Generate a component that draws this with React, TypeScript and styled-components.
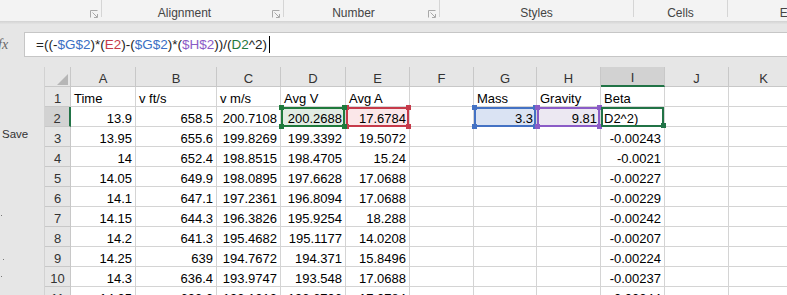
import React from "react";
import styled, { createGlobalStyle } from "styled-components";

const GlobalStyle = createGlobalStyle`
  html, body { margin: 0; padding: 0; background: #e6e6e6; overflow: hidden; }
  body { font-family: "Liberation Sans", Arial, sans-serif; }
`;

const Window = styled.div`
  width: 787px;
  height: 295px;
  overflow: hidden;
  background: #e6e6e6;
  display: flex;
  flex-direction: column;
`;

/* ---------- Ribbon ---------- */
const Ribbon = styled.div`
  height: 21px;
  flex-shrink: 0;
  background: #f3f3f3;
  display: flex;
  overflow: hidden;
`;

const Group = styled.div<{ $w: number }>`
  width: ${(p) => p.$w}px;
  flex-shrink: 0;
  display: flex;
  align-items: flex-start;
  white-space: nowrap;
`;

const GroupLabel = styled.div`
  flex: 1;
  text-align: center;
  padding-top: 6px;
  font-size: 12px;
  line-height: 14px;
  color: #444;
`;

const Launcher = styled.div`
  width: 16px;
  flex-shrink: 0;
  box-sizing: border-box;
  padding: 10px 0 0 5px;
  display: flex;
`;

const Sep = styled.div`
  width: 1px;
  height: 17px;
  flex-shrink: 0;
  background: #d5d5d5;
`;

const RibbonShadow = styled.div`
  height: 3px;
  flex-shrink: 0;
  background: linear-gradient(#d2d2d2, #e3e3e3);
`;

/* ---------- Formula bar ---------- */
const FormulaRow = styled.div`
  display: flex;
  height: 25px;
  margin: 8px 0 10px;
  flex-shrink: 0;
`;

const FxBox = styled.div`
  width: 24px;
  flex-shrink: 0;
  display: flex;
  align-items: center;
  overflow: hidden;
`;

const Fx = styled.span`
  font-family: "Liberation Serif", serif;
  font-style: italic;
  font-size: 14px;
  color: #666;
  margin-left: -2px;
`;

const FormulaInput = styled.div`
  flex: 1;
  box-sizing: border-box;
  background: #fff;
  border: 1px solid #c6c6c6;
  border-right: none;
  display: flex;
  align-items: center;
  padding-left: 11px;
  font-size: 13.5px;
  color: #222;
  white-space: nowrap;
`;

const Tok = styled.span<{ $c?: string }>`
  color: ${(p) => p.$c ?? "#222"};
`;

const Caret = styled.span`
  display: inline-block;
  width: 1px;
  height: 17px;
  margin-left: 2px;
  background: #000;
`;

/* ---------- Sheet ---------- */
const SheetArea = styled.div`
  flex: 1;
  display: flex;
  min-height: 0;
`;

const Sidebar = styled.div`
  width: 45px;
  flex-shrink: 0;
  box-sizing: border-box;
  border-right: 1px solid #d2d2d2;
  display: flex;
  flex-direction: column;
  align-items: flex-start;
`;

const SideText = styled.div`
  margin: 60px 0 0 2px;
  font-size: 11.5px;
  line-height: 14px;
  color: #333;
`;

const SideDot = styled.div<{ $mt: number; $ml: number }>`
  width: 1px;
  height: 1px;
  background: #777;
  margin-top: ${(p) => p.$mt}px;
  margin-left: ${(p) => p.$ml}px;
`;

const Grid = styled.div`
  display: flex;
  flex-direction: column;
`;

const Row = styled.div`
  display: flex;
`;

const Corner = styled.div`
  box-sizing: border-box;
  width: 26px;
  height: 20px;
  flex-shrink: 0;
  border-right: 1px solid #c8c8c8;
  border-bottom: 1px solid #c8c8c8;
  display: flex;
  align-items: flex-end;
  justify-content: flex-end;
  padding: 0 2px 1px 0;
`;

const CornerTri = styled.div`
  width: 0;
  height: 0;
  border-left: 11px solid transparent;
  border-bottom: 11px solid #b6b6b6;
`;

const ColHead = styled.div<{ $w: number; $sel?: boolean }>`
  box-sizing: border-box;
  width: ${(p) => p.$w}px;
  height: 20px;
  flex-shrink: 0;
  background: ${(p) => (p.$sel ? "#d2d2d2" : "#e6e6e6")};
  border-right: 1px solid #c8c8c8;
  border-bottom: ${(p) => (p.$sel ? "2px solid #217346" : "1px solid #c8c8c8")};
  display: flex;
  align-items: flex-end;
  justify-content: center;
  font-size: 13px;
  line-height: ${(p) => (p.$sel ? "14px" : "15px")};
  color: #333;
`;

const RowHead = styled.div<{ $sel?: boolean }>`
  box-sizing: border-box;
  width: 26px;
  height: 20px;
  flex-shrink: 0;
  background: ${(p) => (p.$sel ? "#d2d2d2" : "#e6e6e6")};
  border-bottom: 1px solid #c8c8c8;
  border-right: ${(p) => (p.$sel ? "2px solid #217346" : "1px solid #c8c8c8")};
  display: flex;
  align-items: flex-end;
  justify-content: center;
  font-size: 13px;
  line-height: 15px;
  color: #333;
`;

const Cell = styled.div<{ $w: number; $right: boolean; $fill?: string }>`
  position: relative;
  box-sizing: border-box;
  width: ${(p) => p.$w}px;
  height: 20px;
  flex-shrink: 0;
  background: ${(p) => p.$fill ?? "#fff"};
  border-right: 1px solid #d4d4d4;
  border-bottom: 1px solid #d4d4d4;
  padding: 0 3px;
  display: flex;
  align-items: flex-end;
  justify-content: ${(p) => (p.$right ? "flex-end" : "flex-start")};
  font-size: 13px;
  line-height: 15px;
  color: #000;
  white-space: nowrap;
`;

const RefBox = styled.div<{ $c: string; $z: number }>`
  position: absolute;
  top: 0;
  left: 0;
  right: 0;
  bottom: -1px;
  border: 2px solid ${(p) => p.$c};
  z-index: ${(p) => p.$z};
  pointer-events: none;
`;

const Knob = styled.span<{ $c: string; $v: "top" | "bottom"; $h: "left" | "right" }>`
  position: absolute;
  width: 5px;
  height: 5px;
  background: ${(p) => p.$c};
  ${(p) => p.$v}: -4px;
  ${(p) => p.$h}: -4px;
`;

const FillHandle = styled.span`
  position: absolute;
  width: 5px;
  height: 5px;
  background: #217346;
  right: -4px;
  bottom: -3px;
`;

const LauncherIcon = () => (
  <svg width="8" height="8" viewBox="0 0 8 8" fill="none" stroke="#a8a8a8" strokeWidth="1">
    <path d="M0.5 7.5V0.5H7.5" />
    <path d="M2.5 2.5L7 7" />
    <path d="M4 7.5H7.5V4" />
  </svg>
);

const columns = [
  { k: "A", w: 65 },
  { k: "B", w: 81 },
  { k: "C", w: 64 },
  { k: "D", w: 65 },
  { k: "E", w: 64 },
  { k: "F", w: 64 },
  { k: "G", w: 63 },
  { k: "H", w: 64 },
  { k: "I", w: 64 },
  { k: "J", w: 64 },
  { k: "K", w: 70 },
];

const data: string[][] = [
  ["Time", "v ft/s", "v m/s", "Avg V", "Avg A", "", "Mass", "Gravity", "Beta", "", ""],
  ["13.9", "658.5", "200.7108", "200.2688", "17.6784", "", "3.3", "9.81", "D2^2)", "", ""],
  ["13.95", "655.6", "199.8269", "199.3392", "19.5072", "", "", "", "-0.00243", "", ""],
  ["14", "652.4", "198.8515", "198.4705", "15.24", "", "", "", "-0.0021", "", ""],
  ["14.05", "649.9", "198.0895", "197.6628", "17.0688", "", "", "", "-0.00227", "", ""],
  ["14.1", "647.1", "197.2361", "196.8094", "17.0688", "", "", "", "-0.00229", "", ""],
  ["14.15", "644.3", "196.3826", "195.9254", "18.288", "", "", "", "-0.00242", "", ""],
  ["14.2", "641.3", "195.4682", "195.1177", "14.0208", "", "", "", "-0.00207", "", ""],
  ["14.25", "639", "194.7672", "194.371", "15.8496", "", "", "", "-0.00224", "", ""],
  ["14.3", "636.4", "193.9747", "193.548", "17.0688", "", "", "", "-0.00237", "", ""],
  ["14.35", "633.6", "193.1213", "192.6706", "17.0784", "", "", "", "-0.00244", "", ""],
];

const refs: Record<number, { c: string; fill: string; z: number }> = {
  3: { c: "#1f7a3c", fill: "#e1ece3", z: 4 },
  4: { c: "#c63a4a", fill: "#fbe7e9", z: 3 },
  6: { c: "#4472c4", fill: "#dae3f3", z: 2 },
  7: { c: "#8b5cc7", fill: "#ece8f2", z: 3 },
};

const isNum = (s: string) => /^-?\d+(\.\d+)?$/.test(s);

const formula: [string, string?][] = [
  ["=(("],
  ["-"],
  ["$G$2", "#3a6fc4"],
  [")*("],
  ["E2", "#c63a4a"],
  [")-("],
  ["$G$2", "#3a6fc4"],
  [")*("],
  ["$H$2", "#8b5cc7"],
  ["))/("],
  ["D2", "#1f7a3c"],
  ["^2)"],
];

export default function App() {
  return (
    <>
      <GlobalStyle />
      <Window>
        <Ribbon>
          <Group $w={101}>
            <GroupLabel />
            <Launcher>
              <LauncherIcon />
            </Launcher>
          </Group>
          <Sep />
          <Group $w={181}>
            <GroupLabel>Alignment</GroupLabel>
            <Launcher>
              <LauncherIcon />
            </Launcher>
          </Group>
          <Sep />
          <Group $w={155}>
            <GroupLabel>Number</GroupLabel>
            <Launcher>
              <LauncherIcon />
            </Launcher>
          </Group>
          <Sep />
          <Group $w={193}>
            <GroupLabel>Styles</GroupLabel>
          </Group>
          <Sep />
          <Group $w={93}>
            <GroupLabel>Cells</GroupLabel>
          </Group>
          <Sep />
          <Group $w={140}>
            <GroupLabel>Editing</GroupLabel>
          </Group>
        </Ribbon>
        <RibbonShadow />

        <FormulaRow>
          <FxBox>
            <Fx>fx</Fx>
          </FxBox>
          <FormulaInput>
            {formula.map(([t, c], i) => (
              <Tok key={i} $c={c}>
                {t}
              </Tok>
            ))}
            <Caret />
          </FormulaInput>
        </FormulaRow>

        <SheetArea>
          <Sidebar>
            <SideText>Save</SideText>
            <SideDot $mt={74} $ml={1} />
            <SideDot $mt={43} $ml={3} />
            <SideDot $mt={16} $ml={1} />
          </Sidebar>
          <Grid>
            <Row>
              <Corner>
                <CornerTri />
              </Corner>
              {columns.map((c) => (
                <ColHead key={c.k} $w={c.w} $sel={c.k === "I"}>
                  {c.k}
                </ColHead>
              ))}
            </Row>
            {data.map((row, ri) => (
              <Row key={ri}>
                <RowHead $sel={ri === 1}>{ri + 1}</RowHead>
                {columns.map((c, ci) => {
                  const v = row[ci];
                  const ref = ri === 1 ? refs[ci] : undefined;
                  const active = ri === 1 && ci === 8;
                  return (
                    <Cell key={c.k} $w={c.w} $right={isNum(v)} $fill={ref?.fill}>
                      {v}
                      {ref && (
                        <RefBox $c={ref.c} $z={ref.z}>
                          <Knob $c={ref.c} $v="top" $h="left" />
                          <Knob $c={ref.c} $v="top" $h="right" />
                          <Knob $c={ref.c} $v="bottom" $h="left" />
                          <Knob $c={ref.c} $v="bottom" $h="right" />
                        </RefBox>
                      )}
                      {active && (
                        <RefBox $c="#217346" $z={5}>
                          <FillHandle />
                        </RefBox>
                      )}
                    </Cell>
                  );
                })}
              </Row>
            ))}
          </Grid>
        </SheetArea>
      </Window>
    </>
  );
}
